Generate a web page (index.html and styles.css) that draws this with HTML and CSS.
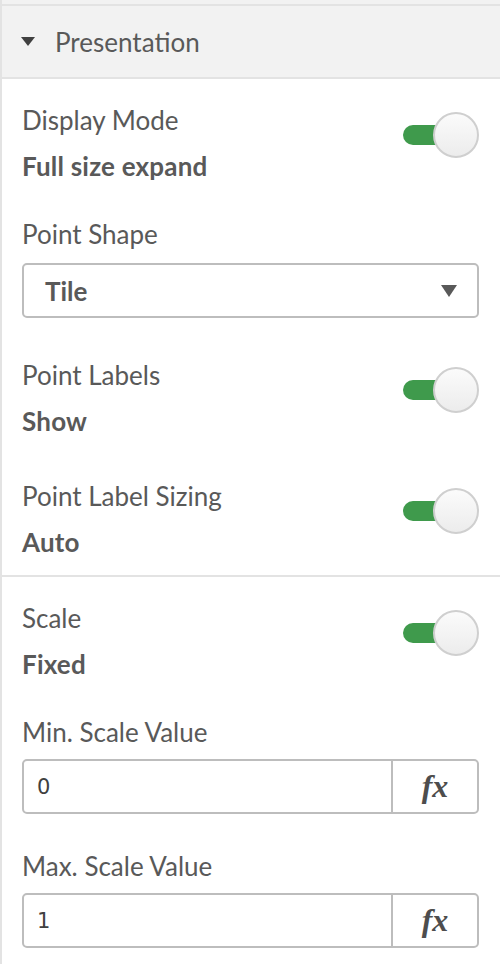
FILE: index.html
```html
<!DOCTYPE html>
<html lang="en">
<head>
  <meta charset="UTF-8">
  <meta name="viewport" content="width=device-width, initial-scale=1.0">
  <title>Presentation</title>
  <link rel="stylesheet" href="styles.css">
</head>
<body>
  <div class="panel">
    <div class="panel-top"></div>
    <div class="section-head">
      <span class="caret"></span>
      <span class="section-title">Presentation</span>
    </div>

    <div class="section-body">
      <div class="prop">
        <div class="prop-text">
          <div class="prop-label">Display Mode</div>
          <div class="prop-value">Full size expand</div>
        </div>
        <div class="switch"><span class="switch-track"></span><span class="switch-knob"></span></div>
      </div>

      <div class="prop prop-select">
        <div class="prop-text">
          <div class="prop-label">Point Shape</div>
          <div class="select">
            <span class="select-value">Tile</span>
            <span class="select-arrow"></span>
          </div>
        </div>
      </div>

      <div class="prop prop-wide">
        <div class="prop-text">
          <div class="prop-label">Point Labels</div>
          <div class="prop-value">Show</div>
        </div>
        <div class="switch"><span class="switch-track"></span><span class="switch-knob"></span></div>
      </div>

      <div class="prop">
        <div class="prop-text">
          <div class="prop-label">Point Label Sizing</div>
          <div class="prop-value">Auto</div>
        </div>
        <div class="switch"><span class="switch-track"></span><span class="switch-knob"></span></div>
      </div>
    </div>

    <div class="section-body divided">
      <div class="prop">
        <div class="prop-text">
          <div class="prop-label">Scale</div>
          <div class="prop-value">Fixed</div>
        </div>
        <div class="switch"><span class="switch-track"></span><span class="switch-knob"></span></div>
      </div>

      <div class="prop prop-wide">
        <div class="prop-text">
          <div class="prop-label">Min. Scale Value</div>
          <div class="field">
            <span class="field-value">0</span>
            <span class="field-fx">fx</span>
          </div>
        </div>
      </div>

      <div class="prop">
        <div class="prop-text">
          <div class="prop-label">Max. Scale Value</div>
          <div class="field">
            <span class="field-value">1</span>
            <span class="field-fx">fx</span>
          </div>
        </div>
      </div>
    </div>
  </div>
</body>
</html>
```

FILE: styles.css
```css
* {
  margin: 0;
  padding: 0;
  box-sizing: border-box;
}
body {
  background: #fff;
  color: #595959;
  font-family: 'Lato', sans-serif;
  font-size: 26px;
}
.panel {
  width: 500px;
  min-height: 100vh;
  border-left: 2px solid #e3e3e3;
}
.panel-top {
  height: 4px;
  background: #f2f2f2;
}
.section-head {
  display: flex;
  align-items: center;
  gap: 20px;
  height: 75px;
  padding-left: 19px;
  background: #f2f2f2;
  border-top: 2px solid #e3e3e3;
  border-bottom: 2px solid #e3e3e3;
}
.caret {
  width: 0;
  height: 0;
  border-left: 7px solid transparent;
  border-right: 7px solid transparent;
  border-top: 9px solid #404040;
}
.section-title {
  line-height: 30px;
}
.section-body {
  padding: 18px 21px 10px 20px;
}
.section-body.divided {
  border-top: 2px solid #e3e3e3;
  padding-top: 18px;
}
.prop {
  display: flex;
  justify-content: space-between;
  align-items: flex-start;
  margin-bottom: 22px;
}
.prop:last-child {
  margin-bottom: 0;
}
.prop-select {
  margin-bottom: 34px;
}
.prop-wide {
  margin-bottom: 29px;
}
.prop-text {
  flex: 1;
}
.prop-label,
.prop-value {
  line-height: 46px;
}
.prop-value {
  font-weight: 700;
  letter-spacing: 0.2px;
}
.switch {
  position: relative;
  flex: none;
  width: 76px;
  height: 46px;
  margin-top: 15px;
}
.switch-track {
  position: absolute;
  left: 0;
  top: 13px;
  width: 56px;
  height: 20px;
  border-radius: 10px;
  background: #3f9a4c;
}
.switch-knob {
  position: absolute;
  right: 0;
  top: 0;
  width: 46px;
  height: 46px;
  border-radius: 50%;
  border: 2px solid #cfcfcf;
  background: linear-gradient(#fbfbfb, #ececec);
}
.select {
  display: flex;
  align-items: center;
  justify-content: space-between;
  height: 55px;
  margin-top: 6px;
  padding: 0 20px 0 21px;
  border: 2px solid #bdbdbd;
  border-radius: 5px;
}
.select-value {
  font-weight: 700;
}
.select-arrow {
  width: 0;
  height: 0;
  border-left: 8px solid transparent;
  border-right: 8px solid transparent;
  border-top: 12px solid #595959;
}
.field {
  display: flex;
  height: 55px;
  margin-top: 4px;
  border: 2px solid #bdbdbd;
  border-radius: 5px;
}
.field-value {
  flex: 1;
  display: flex;
  align-items: center;
  padding-left: 13px;
  font-family: 'DejaVu Sans', sans-serif;
  font-size: 21px;
  color: #404040;
}
.field-fx {
  width: 86px;
  display: flex;
  align-items: center;
  justify-content: center;
  border-left: 2px solid #bdbdbd;
  font-family: 'Liberation Serif', serif;
  font-style: italic;
  font-weight: 700;
  font-size: 32px;
  color: #4d4d4d;
}
```
